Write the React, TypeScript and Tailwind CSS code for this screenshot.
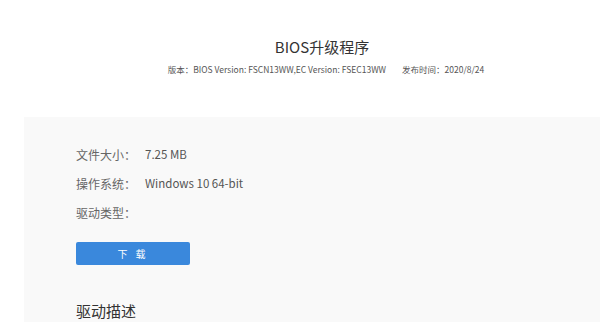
import React from "react";

const rows = [
  { label: "文件大小：", value: "7.25 MB" },
  { label: "操作系统：", value: "Windows 10 64-bit" },
  { label: "驱动类型：", value: "" },
];

export default function App() {
  return (
    <div className="w-[600px] h-[322px] overflow-hidden bg-white font-['Noto_Sans_CJK_SC',sans-serif] text-[#333]">
      {/* Header */}
      <div className="pt-[37px] h-[117px] flex flex-col items-center">
        <h1 className="text-[15px] leading-[20px] text-[#333] ml-[44px]">BIOS升级程序</h1>
        <div className="mt-[6px] ml-[52px] flex items-center text-[8.5px] leading-[12px] text-[#555]">
          <span>版本：BIOS Version: FSCN13WW,EC Version: FSEC13WW</span>
          <span className="ml-[16px]">发布时间：2020/8/24</span>
        </div>
      </div>

      {/* Detail panel */}
      <div className="ml-[24px] bg-[#f9f9f9] h-[205px] pl-[52px] pt-[29px]">
        <div className="flex flex-col gap-[12px]">
          {rows.map((r) => (
            <div key={r.label} className="flex items-center h-[17px] text-[12px]">
              <span className="w-[69px] text-[#666]">{r.label}</span>
              <span className="text-[11.5px] text-[#555]">{r.value}</span>
            </div>
          ))}
        </div>
        <button className="mt-[21px] w-[114px] h-[23px] rounded-[2px] bg-[#3a88dc] text-white text-[10px] tracking-[3px]">
          下 载
        </button>
        <h2 className="mt-[36px] text-[15px] leading-[20px] text-[#333]">驱动描述</h2>
      </div>
    </div>
  );
}
